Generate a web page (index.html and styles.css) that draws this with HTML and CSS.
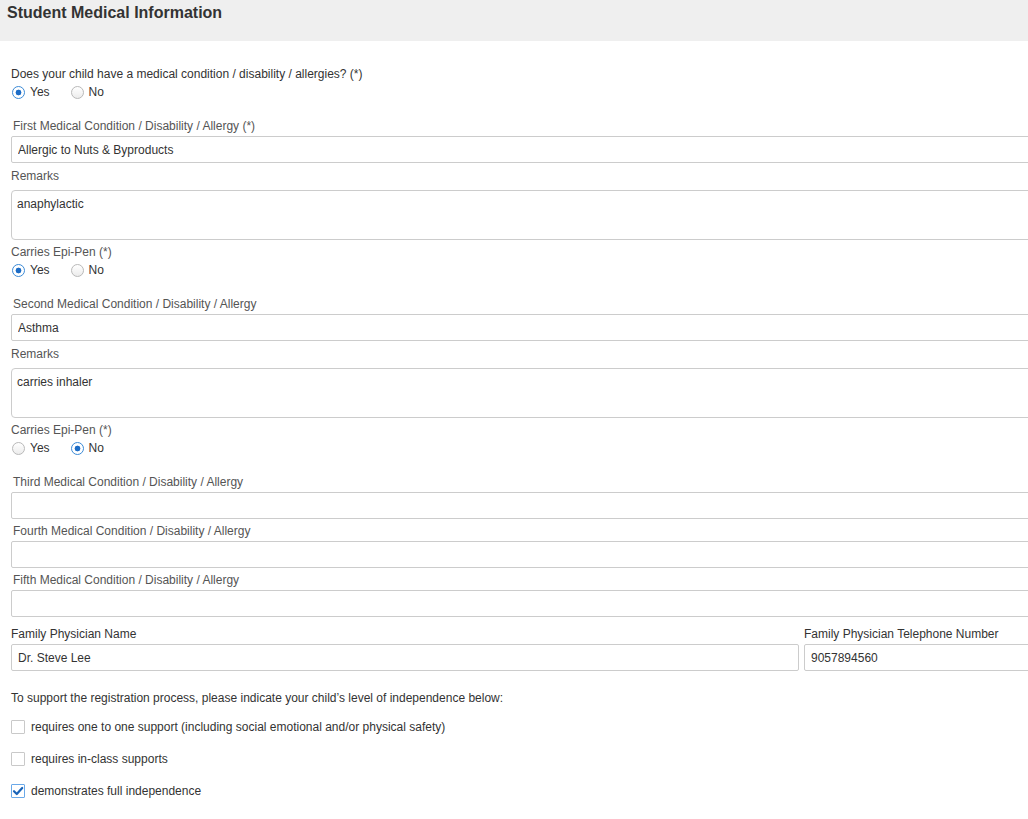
FILE: index.html
```html
<!DOCTYPE html>
<html>
<head>
<meta charset="utf-8">
<title>Student Medical Information</title>
<link rel="stylesheet" href="styles.css">
</head>
<body>
<div class="page">
  <div class="header"><h1 class="title">Student Medical Information</h1></div>
  <div class="form">
    <div class="question">Does your child have a medical condition / disability / allergies? (*)</div>
    <div class="radios">
      <label class="opt"><span class="radio on"></span>Yes</label>
      <label class="opt"><span class="radio"></span>No</label>
    </div>

    <div class="label indent first">First Medical Condition / Disability / Allergy (*)</div>
    <input class="field" type="text" value="Allergic to Nuts &amp; Byproducts" readonly>
    <div class="label remarks">Remarks</div>
    <textarea class="area" readonly>anaphylactic</textarea>
    <div class="label">Carries Epi-Pen (*)</div>
    <div class="radios">
      <label class="opt"><span class="radio on"></span>Yes</label>
      <label class="opt"><span class="radio"></span>No</label>
    </div>

    <div class="label indent first">Second Medical Condition / Disability / Allergy</div>
    <input class="field" type="text" value="Asthma" readonly>
    <div class="label remarks">Remarks</div>
    <textarea class="area" readonly>carries inhaler</textarea>
    <div class="label">Carries Epi-Pen (*)</div>
    <div class="radios">
      <label class="opt"><span class="radio"></span>Yes</label>
      <label class="opt"><span class="radio on"></span>No</label>
    </div>

    <div class="label indent first">Third Medical Condition / Disability / Allergy</div>
    <input class="field" type="text" value="" readonly>
    <div class="label indent">Fourth Medical Condition / Disability / Allergy</div>
    <input class="field" type="text" value="" readonly>
    <div class="label indent">Fifth Medical Condition / Disability / Allergy</div>
    <input class="field" type="text" value="" readonly>

    <div class="physician">
      <div class="col">
        <div class="label">Family Physician Name</div>
        <input class="field" type="text" value="Dr. Steve Lee" readonly>
      </div>
      <div class="col">
        <div class="label">Family Physician Telephone Number</div>
        <input class="field" type="text" value="9057894560" readonly>
      </div>
    </div>

    <div class="support">To support the registration process, please indicate your child’s level of independence below:</div>
    <div class="checks">
      <label class="copt"><span class="check"></span>requires one to one support (including social emotional and/or physical safety)</label>
      <label class="copt"><span class="check"></span>requires in-class supports</label>
      <label class="copt"><span class="check on"><svg viewBox="0 0 12 12" width="12" height="12"><path d="M2 6.2 L4.8 9 L10.2 3" fill="none" stroke="#1a64b8" stroke-width="2.2" stroke-linecap="round" stroke-linejoin="round"/></svg></span>demonstrates full independence</label>
    </div>
  </div>
</div>
</body>
</html>
```
FILE: styles.css
```css
html, body {
  margin: 0;
  padding: 0;
  background: #fff;
  overflow: hidden;
}
body {
  font-family: "Liberation Sans", Arial, sans-serif;
  font-size: 12px;
  color: #333;
}
.page {
  width: 1120px;
}
.header {
  height: 41px;
  background: #efefef;
  padding: 4px 7px 0;
  box-sizing: border-box;
}
.title {
  margin: 0;
  font-size: 16px;
  line-height: 18px;
  font-weight: bold;
  color: #333;
}
.form {
  padding: 25px 0 20px 11px;
  display: flex;
  flex-direction: column;
  align-items: stretch;
}
.question {
  line-height: 16px;
  color: #333;
}
.radios {
  display: flex;
  height: 18px;
  align-items: center;
  margin-top: 1px;
}
.opt {
  display: flex;
  align-items: center;
  margin-right: 20px;
  color: #333;
  line-height: 16px;
}
.radio {
  width: 13px;
  height: 13px;
  box-sizing: border-box;
  border: 1px solid #b9b9b9;
  border-radius: 50%;
  background: linear-gradient(#ffffff, #ececec);
  margin: 0 5px 0 1px;
}
.radio.on {
  border-color: #3b8ad6;
  background: radial-gradient(circle, #1c6cc6 0, #1c6cc6 2.6px, #ffffff 3.2px);
}
.label {
  line-height: 16px;
  color: #555;
  margin-top: 4px;
}
.label.indent {
  padding-left: 2px;
}
.label.first {
  margin-top: 17px;
}
.label.remarks {
  margin-top: 5px;
}
.field {
  display: block;
  box-sizing: border-box;
  width: 100%;
  height: 27px;
  margin: 2px 0 0;
  padding: 0 6px;
  border: 1px solid #cccccc;
  border-radius: 2px;
  font-family: "Liberation Sans", Arial, sans-serif;
  font-size: 12px;
  color: #333;
  background: #fff;
  outline: none;
}
.area {
  display: block;
  box-sizing: border-box;
  width: 100%;
  height: 50px;
  margin: 6px 0 0;
  padding: 5px 5px;
  border: 1px solid #cccccc;
  border-radius: 4px;
  font-family: "Liberation Sans", Arial, sans-serif;
  font-size: 12px;
  line-height: 16px;
  color: #333;
  resize: none;
  outline: none;
}
.physician {
  display: grid;
  grid-template-columns: 788px 1fr;
  column-gap: 5px;
  margin-top: 5px;
}
.physician .label {
  color: #333;
}
.support {
  margin-top: 19px;
  line-height: 16px;
  color: #333;
}
.checks {
  display: flex;
  flex-direction: column;
  gap: 14px;
  margin-top: 12px;
}
.copt {
  display: flex;
  align-items: center;
  height: 18px;
  color: #333;
}
.check {
  width: 14px;
  height: 14px;
  box-sizing: border-box;
  border: 1px solid #c9c9c9;
  border-radius: 1px;
  background: #fff;
  margin-right: 6px;
  display: flex;
  align-items: center;
  justify-content: center;
}
.check.on {
  border-color: #6aa9e9;
}
```
